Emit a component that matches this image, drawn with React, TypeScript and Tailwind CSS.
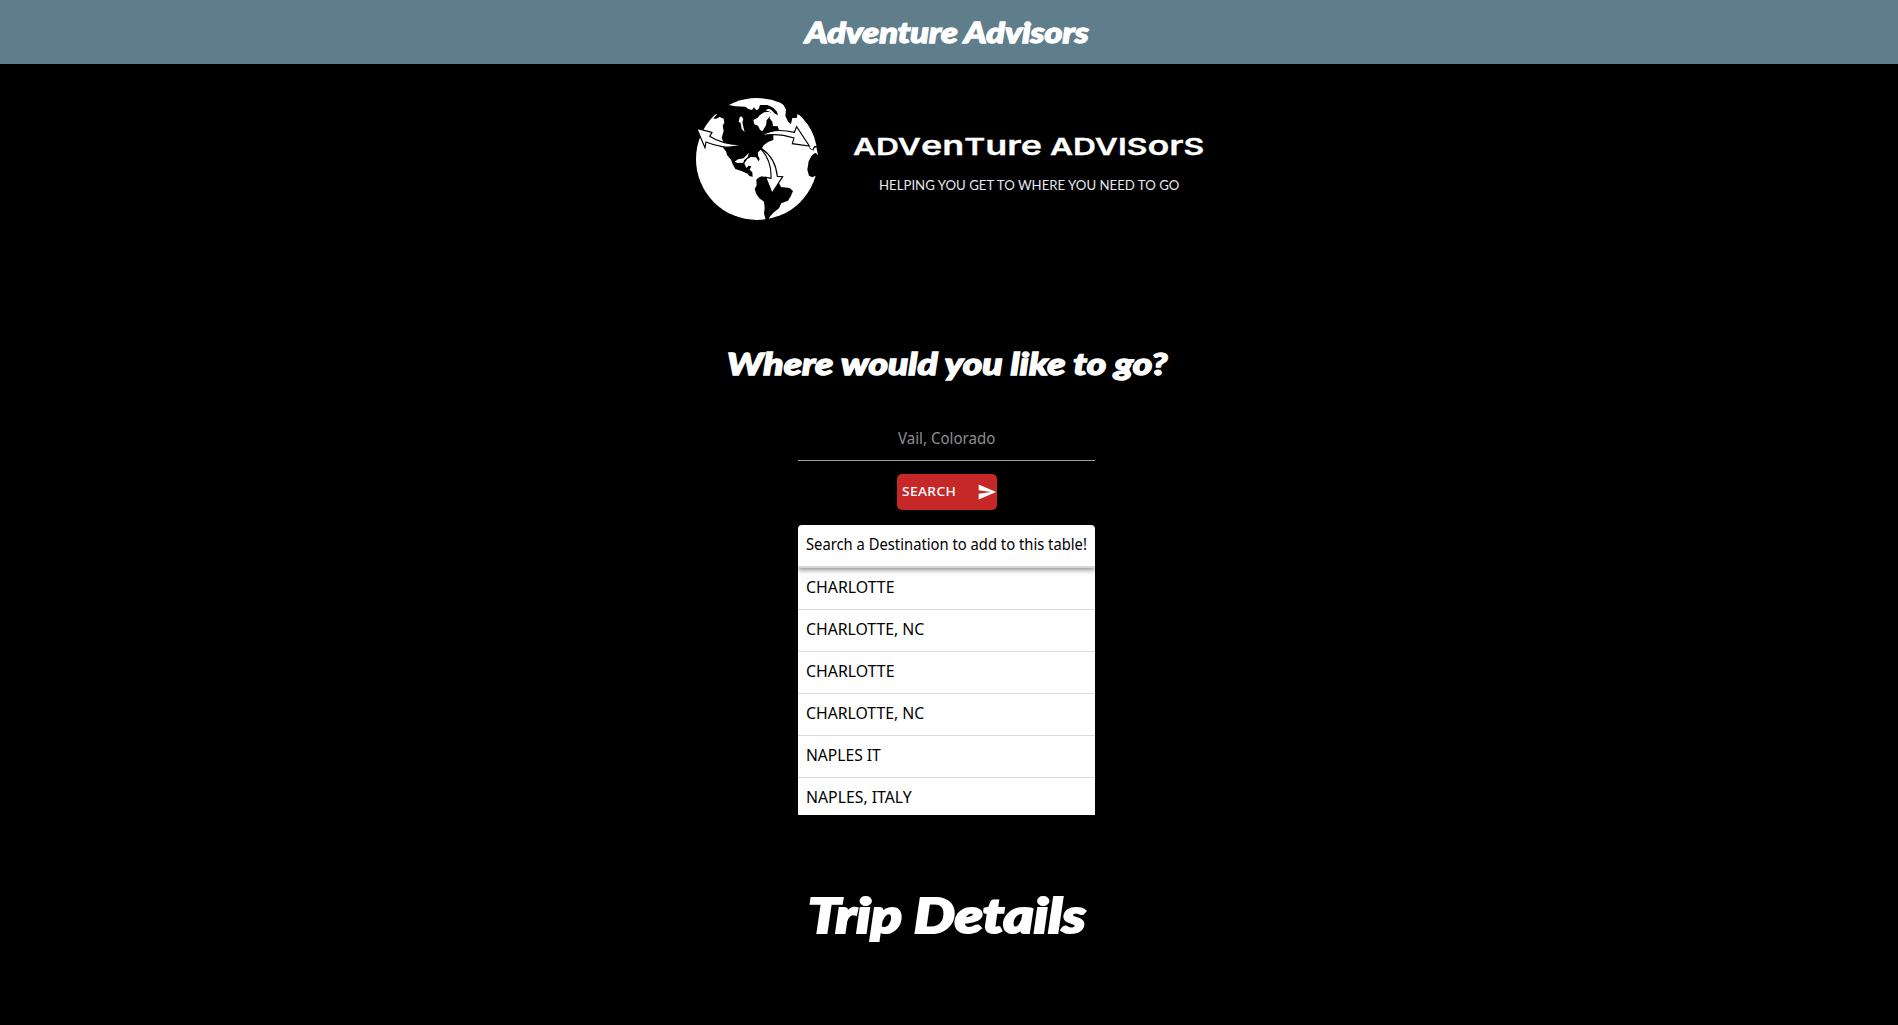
import { useLayoutEffect, useRef, useState, type ReactNode } from "react";
import { MdSend } from "react-icons/md";

/** Stretches a single line of text so that it is exactly `width` pixels wide. */
function FitText({ width, children }: { width: number; children: ReactNode }) {
  const ref = useRef<HTMLSpanElement>(null);
  const [scale, setScale] = useState(1);
  useLayoutEffect(() => {
    if (ref.current) setScale(width / ref.current.offsetWidth);
  }, [width]);
  return (
    <span className="block text-left" style={{ width }}>
      <span
        ref={ref}
        className="inline-block origin-left whitespace-nowrap"
        style={{ transform: `scaleX(${scale})` }}
      >
        {children}
      </span>
    </span>
  );
}

function Globe() {
  return (
    <svg width="160" height="145" viewBox="0 0 480 435" aria-hidden="true" className="shrink-0">
      <circle cx="231" cy="222" r="183" fill="white" />
      <g fill="black">
        {/* North America */}
        <path d="M90 40 L146 60 L166 64 L196 65 L205 72 L216 75 L222 67 L229 76 L236 72 L240 60 L262 60 L280 68 L291 80 L294 91 L285 86 L274 75 L266 71 L256 76 L266 79 L272 82 L267 90 L271 97 L263 103 L268 99 L277 110 L279 123 L293 124 L297 135 L280 148 L280 165 L264 171 L251 181 L244 193 L234 202 L234 212 L239 222 L236 229 L228 217 L213 216 L202 222 L193 235 L199 249 L206 242 L214 244 L209 254 L217 262 L218 275 L208 273 L203 266 L184 258 L166 252 L158 238 L153 224 L141 210 L138 199 L130 190 L130 171 L125 158 L131 138 L128 122 L133 113 L131 101 L119 96 L109 101 L100 101 L111 87 L84 90 Z" />
        {/* South America */}
        <path d="M235 278 L245 274 L259 276 L268 282 L277 278 L286 286 L295 290 L303 306 L329 309 L339 318 L333 332 L324 347 L304 355 L297 370 L280 383 L268 397 L265 409 L257 405 L252 385 L254 369 L252 350 L238 340 L229 327 L224 312 L230 301 L229 284 Z" />
        <path d="M286 30 L299 50 L311 61 L318 74 L316 93 L325 111 L333 117 L337 99 L345 103 L352 98 L352 88 L375 96 L420 70 L370 20 Z" />
        {/* Africa and the Mediterranean */}
        <path d="M385 184 L397 194 L402 184 L425 180 L430 290 L407 272 L397 277 L387 272 L382 254 L386 229 L395 212 L403 205 L399 196 L391 193 Z" />
      </g>
      <path d="M352 88 Q385 110 403 158 L402 184 L396 190 L385 180 L350 120 L337 112 L338 99 L352 98 Z" fill="white" />
      <path d="M403 190 L409 186 L414 211 L407 204 L396 206 Z" fill="white" />
      {/* Lakes and bays */}
      <g fill="white">
        <path d="M184 94 L190 102 L187 112 L190 126 L194 141 L185 132 L182 114 L176 110 L179 97 Z" />
        <path d="M220 105 L233 98 L239 91 L252 82 L270 80 L270 94 L260 106 L258 121 L247 139 L240 134 L234 122 L223 118 Z" />
        <path d="M207 203 L203 216 L192 226 L190 233 L173 234 L164 230 L174 223 L191 220 Z" />
      </g>
      {/* Route arrows */}
      <g fill="white" stroke="black" strokeWidth="3.5" strokeLinejoin="miter">
        <path d="M188 179 Q157 190 127 185 Q102 181 78 171 L75 188 L50 130 L96 142 L89 154 Q128 180 188 179 Z" />
        <path d="M243 153 Q280 127 343 142 L350 125 L388 183 L337 176 L342 159 Q289 142 243 153 Z" />
        <path d="M238 187 Q286 214 292 274 L308 275 L276 325 L257 277 L273 280 Q276 224 238 187 Z" />
      </g>
    </svg>
  );
}

/** Lowercase letter drawn at the height of a capital, for the unicase wordmark. */
function Small({ children }: { children: string }) {
  return <span className="text-[26px]">{children}</span>;
}

function Wordmark() {
  return (
    <div className="flex w-[378px] flex-col items-center">
      <div className="mr-[2px] mt-[41px] h-10 font-['Inter'] text-[23px] font-semibold leading-10 [-webkit-text-stroke:0.3px_white]">
        <FitText width={351}>
          ADV<Small>en</Small>T<Small>ure</Small> ADVIS<Small>o</Small>
          <Small>r</Small>S
        </FitText>
      </div>
      <div className="mt-[9px] h-5 font-['Lato'] text-[14px] leading-5 text-gray-200">
        <FitText width={300}>HELPING YOU GET TO WHERE YOU NEED TO GO</FitText>
      </div>
    </div>
  );
}

const destinations = [
  { name: "CHARLOTTE", width: 88 },
  { name: "CHARLOTTE, NC", width: 118 },
  { name: "CHARLOTTE", width: 88 },
  { name: "CHARLOTTE, NC", width: 118 },
  { name: "NAPLES IT", width: 74.5 },
  { name: "NAPLES, ITALY", width: 106 },
];

export default function App() {
  return (
    <div className="h-[1025px] overflow-hidden bg-black font-['Noto_Sans',sans-serif] text-white">
      <header className="flex h-16 items-center justify-center bg-[#607d8b] pr-1">
        <h1 className="font-['Lato'] text-[28px] font-black italic leading-[34px] [-webkit-text-stroke:1.3px_white]">
          <FitText width={284}>Adventure Advisors</FitText>
        </h1>
      </header>

      <main className="flex flex-col items-center pr-[5px]">
        <section className="ml-[5px] mt-[21px] flex h-[145px] w-[538px]">
          <Globe />
          <Wordmark />
        </section>

        <h2 className="ml-px mt-[113px] h-10 font-['Lato'] text-[31px] font-black italic leading-10 [-webkit-text-stroke:1.4px_white]">
          <FitText width={440}>Where would you like to go?</FitText>
        </h2>

        <div className="mt-[33px] flex h-[45px] w-[297px] justify-center border-b border-[#9e9e9e] text-base leading-[45px] text-[#8f8f8f]">
          <FitText width={97}>Vail, Colorado</FitText>
        </div>

        <button className="ml-px mt-[13px] flex h-9 w-[100px] items-center justify-between rounded-[5px] bg-[#c62828] pl-[5px] text-xs font-medium">
          <FitText width={54}>
            <span className="tracking-wide">SEARCH</span>
          </FitText>
          <MdSend className="size-5" />
        </button>

        <div className="mt-[15px] h-[290px] w-[297px] overflow-hidden rounded-t bg-white text-[15.5px] leading-6 text-black">
          <div className="relative h-[43px] border-b-2 border-[#d6d6d6] px-2 pt-[7px] shadow-[0_2px_5px_rgba(0,0,0,0.45)]">
            <FitText width={281}>Search a Destination to add to this table!</FitText>
          </div>
          {destinations.map((d, i) => (
            <div key={i} className="h-[42px] border-b border-[#dadada] px-2 pt-[7px]">
              <FitText width={d.width}>{d.name}</FitText>
            </div>
          ))}
        </div>

        <h2 className="mt-[71px] h-[58px] font-['Lato'] text-[48px] font-black italic leading-[58px] [-webkit-text-stroke:2.2px_white]">
          <FitText width={278}>Trip Details</FitText>
        </h2>
      </main>
    </div>
  );
}
